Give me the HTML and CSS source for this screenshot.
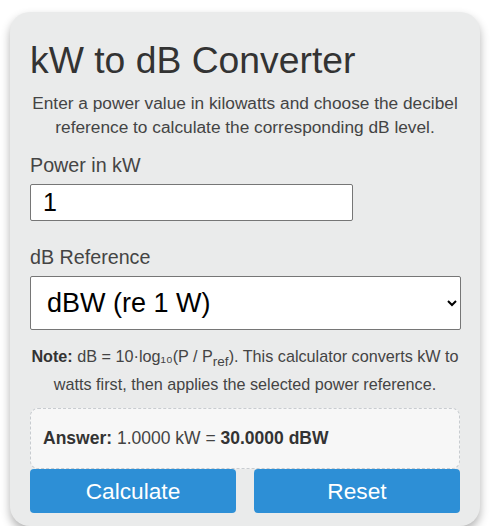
FILE: index.html
```html
<!DOCTYPE html>
<html lang="en">

<head>
    <meta charset="UTF-8">
    <meta name="viewport" content="width=device-width, initial-scale=1.0">
    <title>kW to dB Converter</title>
    <link rel="stylesheet" href="styles.css">
</head>

<body>

    <div class="calculator">
        <h1>kW to dB Converter</h1>
        <p class="intro">Enter a power value in kilowatts and choose the decibel reference to calculate the corresponding dB level.</p>

        <label for="powerKw">Power in kW</label>
        <input type="number" id="powerKw" value="1">

        <label for="dbRef">dB Reference</label>
        <select id="dbRef">
            <option value="1">dBW (re 1 W)</option>
            <option value="0.001">dBm (re 1 mW)</option>
            <option value="1000">dBk (re 1 kW)</option>
        </select>

        <p class="note"><strong>Note:</strong> dB = 10·log₁₀(P / P<sub>ref</sub>). This calculator converts kW to watts first, then applies the selected power reference.</p>

        <div class="answer" id="answer"><strong>Answer:</strong> 1.0000 kW = <strong>30.0000 dBW</strong></div>

        <div class="buttons">
            <button class="btn" onclick="calculate()">Calculate</button>
            <button class="btn" onclick="resetForm()">Reset</button>
        </div>
    </div>

    <script>
        function calculate() {
            const kw = parseFloat(document.getElementById('powerKw').value);
            const sel = document.getElementById('dbRef');
            const ref = parseFloat(sel.value);
            const unit = sel.options[sel.selectedIndex].text.split(' ')[0];

            if (isNaN(kw) || kw <= 0) {
                document.getElementById('answer').innerHTML = '<strong>Answer:</strong> enter a power above 0 kW';
                return;
            }

            const db = 10 * Math.log10((kw * 1000) / ref);
            document.getElementById('answer').innerHTML =
                `<strong>Answer:</strong> ${kw.toFixed(4)} kW = <strong>${db.toFixed(4)} ${unit}</strong>`;
        }

        function resetForm() {
            document.getElementById('powerKw').value = '';
            document.getElementById('dbRef').selectedIndex = 0;
            document.getElementById('answer').innerHTML = '';
        }
    </script>

</body>

</html>
```

FILE: styles.css
```css
* {
    box-sizing: border-box;
}

body {
    margin: 0;
    padding: 12px 12px 0 10px;
    background: #fff;
    font-family: 'Liberation Sans', Arial, sans-serif;
    color: #444;
}

.calculator {
    width: 470px;
    background: #eaebeb;
    border-radius: 20px;
    padding: 26px 20px 13px;
    box-shadow: 0 5px 10px rgba(0, 0, 0, 0.3);
    display: flex;
    flex-direction: column;
}

h1 {
    margin: 0 0 9px;
    font-size: 37.3px;
    font-weight: normal;
    color: #333;
    line-height: 44px;
}

.intro {
    margin: 0 -2px 14px;
    font-size: 17.3px;
    line-height: 24px;
    text-align: center;
}

label {
    font-size: 19.7px;
    line-height: 24px;
    margin-bottom: 7px;
}

input[type="number"] {
    width: 323px;
    height: 37px;
    padding: 0 12px;
    margin-bottom: 24px;
    border: 1px solid #767676;
    border-radius: 2px;
    background: #fff;
    font-family: inherit;
    font-size: 25px;
    color: #000;
}

select {
    width: 431px;
    height: 54px;
    padding: 0 12px;
    border: 1px solid #767676;
    border-radius: 2px;
    background: #fff;
    font-family: inherit;
    font-size: 27px;
    color: #000;
}

.note {
    margin: 12px 0 10px;
    font-size: 16.2px;
    line-height: 28px;
    text-align: center;
}

.note strong {
    color: #333;
}

.note sub {
    line-height: 0;
}

.answer {
    min-height: 61px;
    padding: 19px 12px;
    background: #f7f7f7;
    border: 1px dashed #c8ccd0;
    border-radius: 8px;
    font-size: 17.5px;
    color: #444;
}

.answer strong {
    color: #333;
}

.buttons {
    display: flex;
    gap: 18px;
}

.btn {
    flex: 1;
    height: 44px;
    border: none;
    border-radius: 4px;
    background: #2d8fd6;
    color: #fff;
    font-family: inherit;
    font-size: 22.7px;
    cursor: pointer;
}

.btn:hover {
    background: #2479b8;
}
```
